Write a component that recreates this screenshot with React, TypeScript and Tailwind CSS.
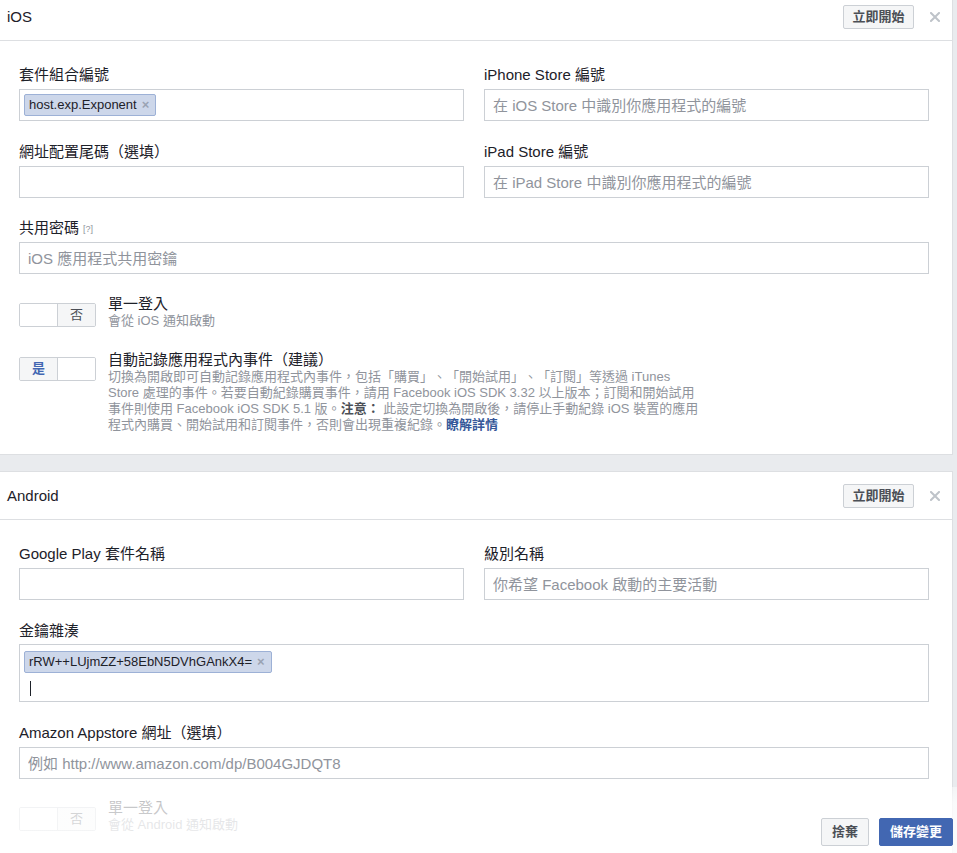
import React from "react";

function CloseX() {
  return (
    <svg width="10" height="10" viewBox="0 0 10 10" className="ml-[16px]">
      <path d="M1 1 L9 9 M9 1 L1 9" stroke="#bec3c9" strokeWidth="2" strokeLinecap="square" />
    </svg>
  );
}

function Header({ title }: { title: string }) {
  return (
    <div className="flex h-[48px] items-center border-b border-[#dddfe2] pl-[7px] pr-[12px]">
      <div className="flex-1 text-[15px] leading-[18px] text-[#1d2129]">{title}</div>
      <button className="h-[24px] w-[71px] rounded-[2px] border border-[#ccd0d5] bg-[#f5f6f7] text-[13px] font-bold leading-[22px] text-[#4b4f56]">
        立即開始
      </button>
      <CloseX />
    </div>
  );
}

function Label({ children }: { children: React.ReactNode }) {
  return <div className="mb-[5px] h-[18px] whitespace-nowrap text-[15px] leading-[18px] text-[#1d2129]">{children}</div>;
}

function TextInput({ placeholder }: { placeholder?: string }) {
  return (
    <input
      readOnly
      placeholder={placeholder}
      className="block h-[32px] w-full rounded-none border border-[#ccd0d5] bg-white px-[8px] text-[15px] text-[#1d2129] outline-none placeholder:text-[#90949c]"
    />
  );
}

function Tag({ text }: { text: string }) {
  return (
    <span className="inline-flex h-[22px] items-center rounded-[2px] border border-[#9db1d6] bg-[#cdd7ea] pl-[4px] pr-[6px] text-[13px] leading-[20px] text-[#1d2129]">
      {text}
      <span className="ml-[5px] text-[13px] font-bold text-[#9aa3b3]">×</span>
    </span>
  );
}

function Toggle({ on }: { on: boolean }) {
  return (
    <div className="flex h-[24px] w-[77px] shrink-0 overflow-hidden rounded-[2px] border border-[#ccd0d5]">
      {on ? (
        <>
          <div className="flex w-[38px] items-center justify-center border-r border-[#ccd0d5] bg-[#f5f6f7] text-[13px] font-bold text-[#4267b2]">是</div>
          <div className="flex-1 bg-white" />
        </>
      ) : (
        <>
          <div className="w-[38px] border-r border-[#ccd0d5] bg-white" />
          <div className="flex flex-1 items-center justify-center bg-[#f5f6f7] text-[13px] text-[#4b4f56]">否</div>
        </>
      )}
    </div>
  );
}

function ToggleRow({ on, title, offset, children }: { on: boolean; title: string; offset: string; children: React.ReactNode }) {
  return (
    <div className="flex items-start">
      <div className={offset}>
        <Toggle on={on} />
      </div>
      <div className="ml-[12px]">
        <div className="h-[18px] whitespace-nowrap text-[15px] leading-[18px] text-[#1d2129]">{title}</div>
        <div className="text-[13px] leading-[16px] text-[#90949c]">{children}</div>
      </div>
    </div>
  );
}

export default function App() {
  return (
    <div className="relative h-[853px] w-[957px] overflow-hidden bg-[#e9ebee] font-['Liberation_Sans','Noto_Sans_CJK_TC',sans-serif] [text-spacing-trim:space-all]">
      <div className="mt-[-8px] w-[953px] border-y border-r border-[#dddfe2] bg-white">
        <Header title="iOS" />
        <div className="pb-[21px] pl-[19px] pr-[23px] pt-[25px]">
          <div className="grid grid-cols-2 gap-x-[20px] gap-y-[22px]">
            <div>
              <Label>套件組合編號</Label>
              <div className="flex h-[32px] items-center border border-[#ccd0d5] bg-white px-[4px]">
                <Tag text="host.exp.Exponent" />
              </div>
            </div>
            <div>
              <Label>iPhone Store 編號</Label>
              <TextInput placeholder="在 iOS Store 中識別你應用程式的編號" />
            </div>
            <div>
              <Label>網址配置尾碼（選填）</Label>
              <TextInput />
            </div>
            <div>
              <Label>iPad Store 編號</Label>
              <TextInput placeholder="在 iPad Store 中識別你應用程式的編號" />
            </div>
          </div>
          <div className="mt-[21px]">
            <Label>
              共用密碼<span className="ml-[4px] align-middle text-[9px] text-[#90949c]">[?]</span>
            </Label>
            <TextInput placeholder="iOS 應用程式共用密鑰" />
          </div>
          <div className="mt-[21px]">
            <ToggleRow on={false} title="單一登入" offset="mt-[8px]">
              會從 iOS 通知啟動
            </ToggleRow>
          </div>
          <div className="mt-[22px]">
            <ToggleRow on={true} title="自動記錄應用程式內事件（建議）" offset="mt-[6px]">
              <div className="whitespace-nowrap">切換為開啟即可自動記錄應用程式內事件，包括「購買」、「開始試用」、「訂閱」等透過 iTunes</div>
              <div className="whitespace-nowrap">Store 處理的事件。若要自動紀錄購買事件，請用 Facebook iOS SDK 3.32 以上版本；訂閱和開始試用</div>
              <div className="whitespace-nowrap">
                事件則使用 Facebook iOS SDK 5.1 版。<span className="font-bold text-[#4b4f56]">注意：</span> 此設定切換為開啟後，請停止手動紀錄 iOS 裝置的應用
              </div>
              <div className="whitespace-nowrap">
                程式內購買、開始試用和訂閱事件，否則會出現重複紀錄。<span className="font-bold text-[#365899]">瞭解詳情</span>
              </div>
            </ToggleRow>
          </div>
        </div>
      </div>

      <div className="mt-[16px] w-[953px] border-y border-r border-[#dddfe2] bg-white">
        <Header title="Android" />
        <div className="pb-[40px] pl-[19px] pr-[23px] pt-[25px]">
          <div className="grid grid-cols-2 gap-x-[20px]">
            <div>
              <Label>Google Play 套件名稱</Label>
              <TextInput />
            </div>
            <div>
              <Label>級別名稱</Label>
              <TextInput placeholder="你希望 Facebook 啟動的主要活動" />
            </div>
          </div>
          <div className="mt-[22px]">
            <div className="mb-[4px] h-[18px] whitespace-nowrap text-[15px] leading-[18px] text-[#1d2129]">金鑰雜湊</div>
            <div className="h-[58px] border border-[#ccd0d5] bg-white px-[4px] pt-[4px]">
              <Tag text="rRW++LUjmZZ+58EbN5DVhGAnkX4=" />
              <div className="ml-[6px] mt-[8px] h-[15px] w-0 border-l border-[#1d2129]" />
            </div>
          </div>
          <div className="mt-[22px]">
            <Label>Amazon Appstore 網址（選填）</Label>
            <TextInput placeholder="例如 http://www.amazon.com/dp/B004GJDQT8" />
          </div>
          <div className="mt-[20px]">
            <ToggleRow on={false} title="單一登入" offset="mt-[8px]">
              會從 Android 通知啟動
            </ToggleRow>
          </div>
        </div>
      </div>

      <div className="absolute bottom-0 left-0 right-0 h-[66px] bg-[linear-gradient(to_bottom,rgba(255,255,255,0.45)_0px,rgba(255,255,255,0.75)_16px,rgba(255,255,255,0.8)_100%)]" />
      <div className="absolute bottom-[7px] right-[4px] flex gap-[10px]">
        <button className="h-[28px] w-[48px] rounded-[2px] border border-[#ccd0d5] bg-[#f5f6f7] text-[13px] font-bold text-[#4b4f56]">捨棄</button>
        <button className="h-[28px] w-[74px] rounded-[2px] border border-[#4267b2] bg-[#4267b2] text-[13px] font-bold text-white">儲存變更</button>
      </div>
    </div>
  );
}
